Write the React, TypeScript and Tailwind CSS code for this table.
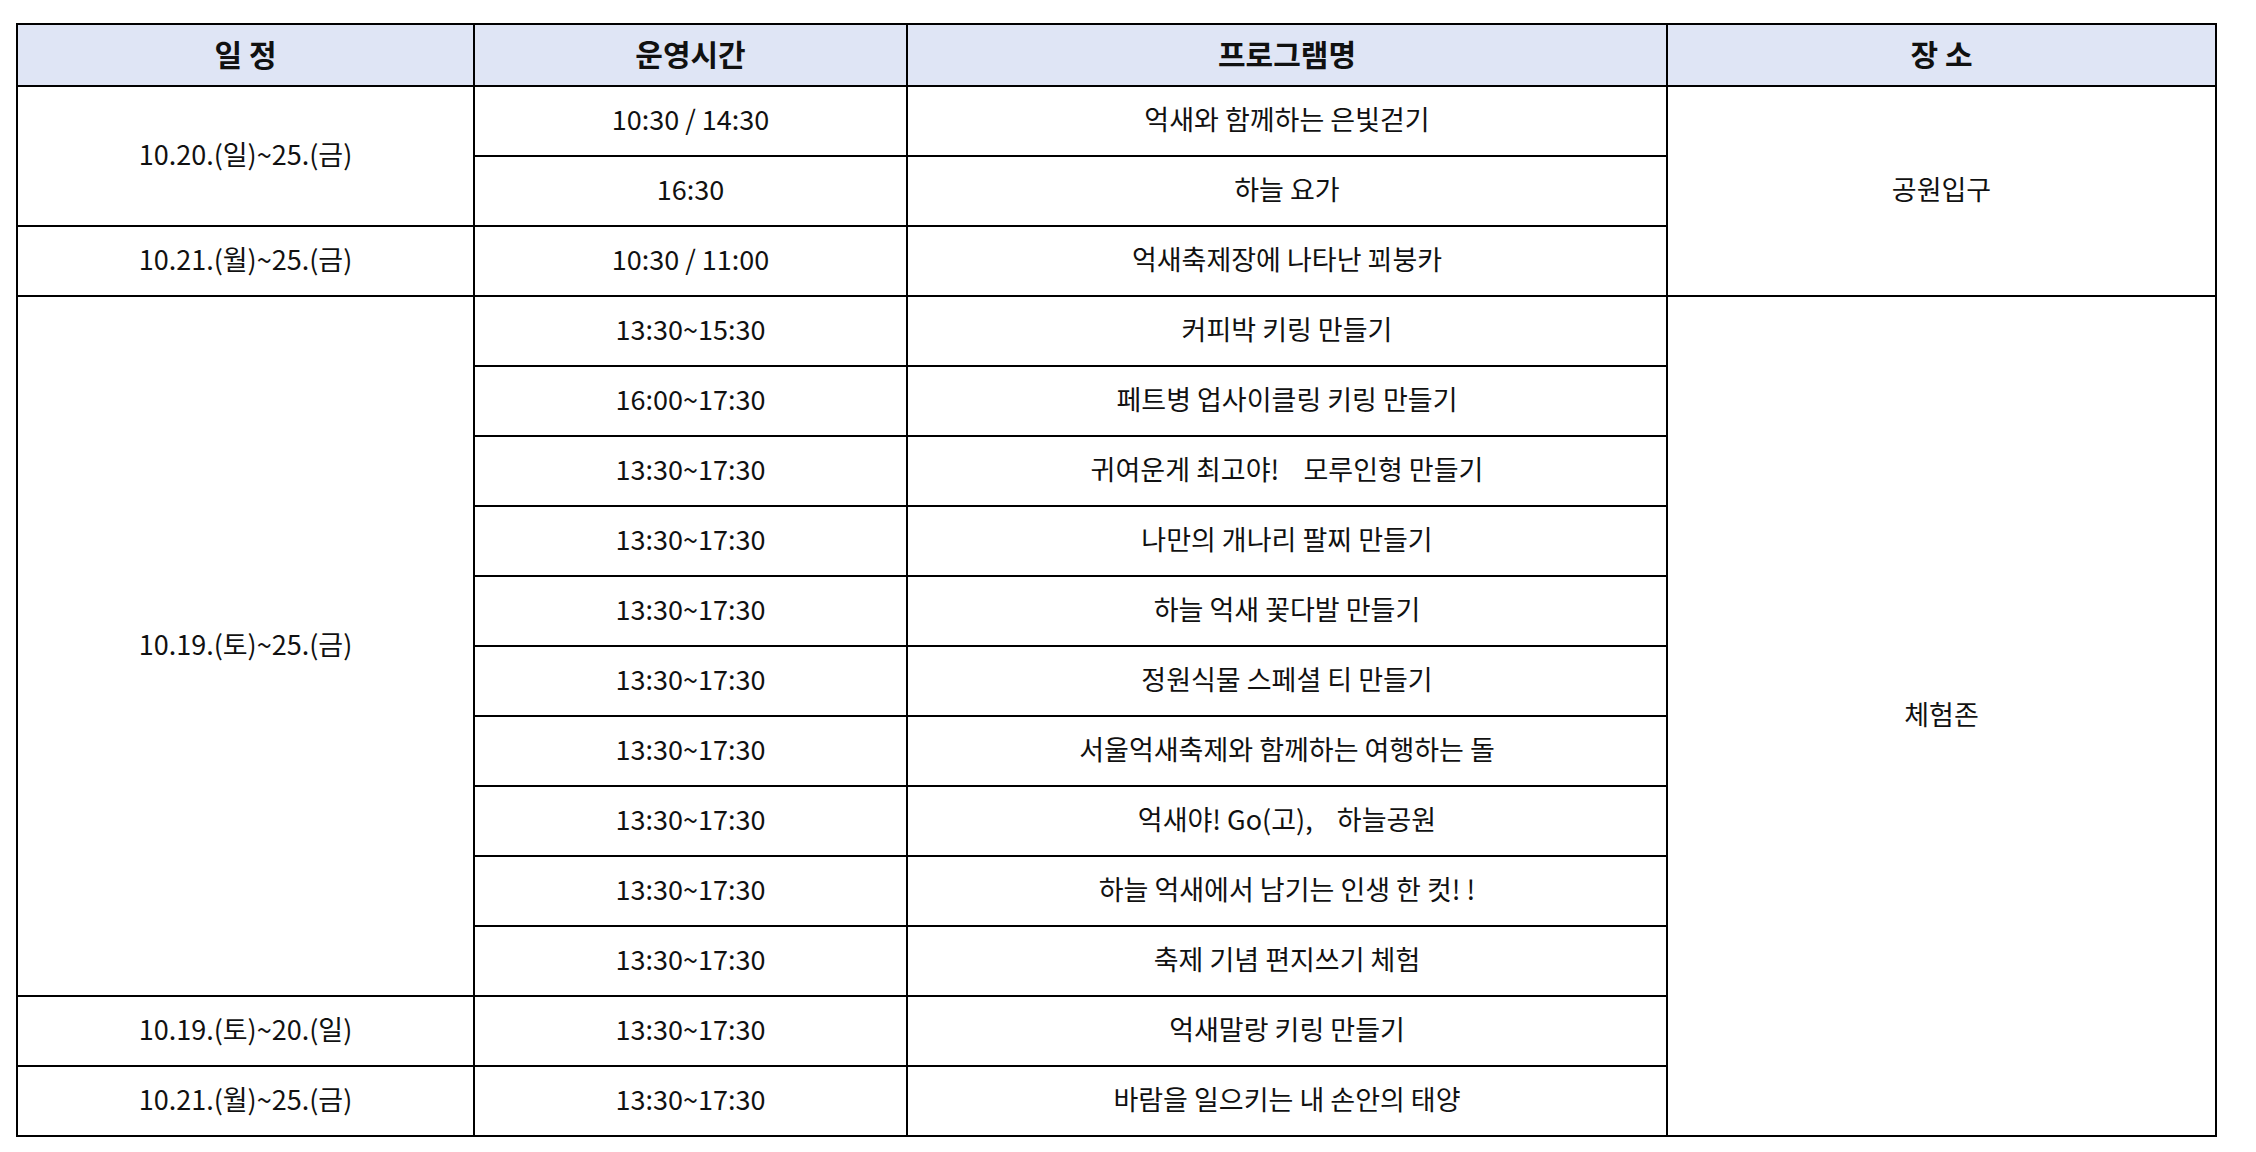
type Row = {
  date?: { text: string; span: number };
  time: string;
  program: string;
  place?: { text: string; span: number };
};

const rows: Row[] = [
  {
    date: { text: '10.20.(일)~25.(금)', span: 2 },
    time: '10:30 / 14:30',
    program: '억새와 함께하는 은빛걷기',
    place: { text: '공원입구', span: 3 },
  },
  { time: '16:30', program: '하늘 요가' },
  {
    date: { text: '10.21.(월)~25.(금)', span: 1 },
    time: '10:30 / 11:00',
    program: '억새축제장에 나타난 꾀붕카',
  },
  {
    date: { text: '10.19.(토)~25.(금)', span: 10 },
    time: '13:30~15:30',
    program: '커피박 키링 만들기',
    place: { text: '체험존', span: 12 },
  },
  { time: '16:00~17:30', program: '페트병 업사이클링 키링 만들기' },
  { time: '13:30~17:30', program: '귀여운게 최고야!    모루인형 만들기' },
  { time: '13:30~17:30', program: '나만의 개나리 팔찌 만들기' },
  { time: '13:30~17:30', program: '하늘 억새 꽃다발 만들기' },
  { time: '13:30~17:30', program: '정원식물 스페셜 티 만들기' },
  { time: '13:30~17:30', program: '서울억새축제와 함께하는 여행하는 돌' },
  { time: '13:30~17:30', program: '억새야! Go(고),    하늘공원' },
  { time: '13:30~17:30', program: '하늘 억새에서 남기는 인생 한 컷! !' },
  { time: '13:30~17:30', program: '축제 기념 편지쓰기 체험' },
  {
    date: { text: '10.19.(토)~20.(일)', span: 1 },
    time: '13:30~17:30',
    program: '억새말랑 키링 만들기',
  },
  {
    date: { text: '10.21.(월)~25.(금)', span: 1 },
    time: '13:30~17:30',
    program: '바람을 일으키는 내 손안의 태양',
  },
];

const cell = 'border-2 border-black text-center align-middle px-0 pt-0 pb-[3px]';

export default function App() {
  return (
    <div className="min-h-screen bg-white pt-[23px] pl-[16px] font-['Noto_Sans_CJK_KR',sans-serif] text-[#111]">
      <table className="w-[2199px] table-fixed border-collapse">
        <colgroup>
          <col className="w-[457px]" />
          <col className="w-[433px]" />
          <col className="w-[760px]" />
          <col className="w-[549px]" />
        </colgroup>
        <thead>
          <tr className="h-[62px] bg-[#dfe5f5] text-[30px] font-bold">
            <th className={cell}>일 정</th>
            <th className={cell}>운영시간</th>
            <th className={cell}>프로그램명</th>
            <th className={cell}>장 소</th>
          </tr>
        </thead>
        <tbody className="text-[27px]">
          {rows.map((r, i) => (
            <tr key={i} className="h-[70px]">
              {r.date && (
                <td rowSpan={r.date.span} className={cell}>
                  {r.date.text}
                </td>
              )}
              <td className={cell}>{r.time}</td>
              <td className={`${cell} whitespace-pre`}>{r.program}</td>
              {r.place && (
                <td rowSpan={r.place.span} className={cell}>
                  {r.place.text}
                </td>
              )}
            </tr>
          ))}
        </tbody>
      </table>
    </div>
  );
}
